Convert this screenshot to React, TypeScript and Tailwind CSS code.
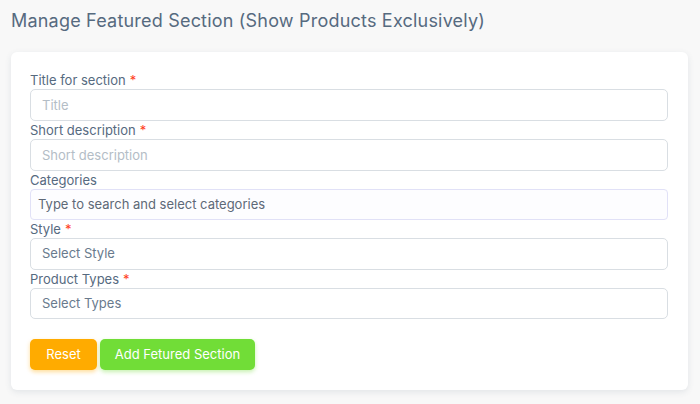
const fields = [
  { label: "Title for section", required: true, placeholder: "Title" },
  { label: "Short description", required: true, placeholder: "Short description" },
];

const Label = ({ text, required }: { text: string; required?: boolean }) => (
  <label className="block h-[18px] text-[13px] leading-[18px] text-[#566a7f]">
    {text}
    {required && <span className="ml-1 text-[#ff3e1d]">*</span>}
  </label>
);

const SelectBox = ({ text }: { text: string }) => (
  <div className="flex h-[32px] items-center rounded-[5px] border border-[#d9dee3] bg-white px-[11px] text-[13px] text-[#697a8d]">
    {text}
  </div>
);

export default function App() {
  return (
    <div
      className="min-h-[404px] bg-[#f8f8f8] px-[11px] pb-4 pt-[8px]"
      style={{ fontFamily: "Inter, 'Noto Sans', sans-serif" }}
    >
      <h4 className="h-[26px] text-[18px] leading-[26px] tracking-[0.2px] text-[#566a7f]">
        Manage Featured Section (Show Products Exclusively)
      </h4>
      <div className="mt-[18px] w-[677px] rounded-[6px] bg-white pb-5 pl-[19px] pr-5 pt-[19px] shadow-[0_2px_6px_rgba(67,89,113,0.12)]">
        {fields.map((f, i) => (
          <div key={i}>
            <Label text={f.label} required={f.required} />
            <input
              placeholder={f.placeholder}
              className="block h-[32px] w-full rounded-[5px] border border-[#d9dee3] bg-white px-[11px] text-[13px] text-[#697a8d] outline-none placeholder:text-[#b4bdc6]"
            />
          </div>
        ))}
        <Label text="Categories" />
        <div className="flex h-[31px] items-center rounded-[4px] border border-[#e1e1f7] bg-[#fdfdff] px-[7px] text-[13px] text-[#5e6977]">
          Type to search and select categories
        </div>
        <Label text="Style" required />
        <SelectBox text="Select Style" />
        <Label text="Product Types" required />
        <div className="flex h-[31px] items-center rounded-[5px] border border-[#d9dee3] bg-white px-[11px] text-[13px] text-[#697a8d]">
          Select Types
        </div>
        <div className="mt-5 flex gap-[3px]">
          <button className="h-[31px] w-[67px] rounded-[5px] bg-[#ffab00] text-[13px] text-white shadow-[0_2px_4px_rgba(255,171,0,0.4)]">
            Reset
          </button>
          <button className="h-[31px] w-[155px] rounded-[5px] bg-[#71dd37] text-[13px] text-white shadow-[0_2px_4px_rgba(113,221,55,0.4)]">
            Add Fetured Section
          </button>
        </div>
      </div>
    </div>
  );
}
